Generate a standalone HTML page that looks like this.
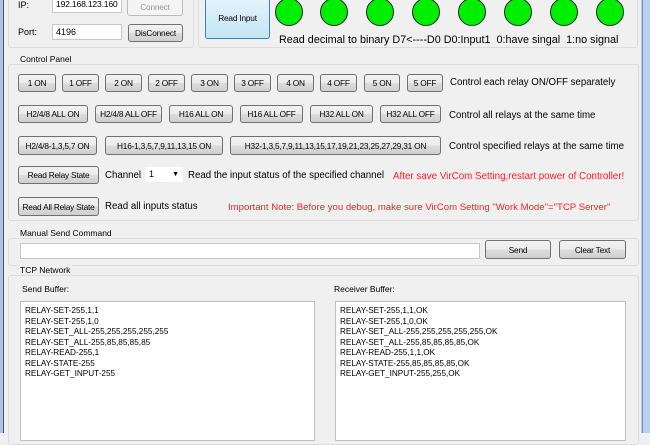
<!DOCTYPE html>
<html><head><style>
*{margin:0;padding:0;box-sizing:border-box}
body{width:650px;height:433px;overflow:hidden;background:#f0f0f0;font-family:"Liberation Sans",sans-serif;font-size:9.7px;color:#000;position:relative}
.a{position:absolute;white-space:nowrap}
.b{position:absolute;border:1px solid #707070;border-radius:3px;background:linear-gradient(#f2f2f2,#ebebeb 50%,#dddddd 51%,#cfcfcf);font-size:8.3px;letter-spacing:-0.2px;text-align:center;color:#000;display:flex;align-items:center;justify-content:center;white-space:nowrap;overflow:hidden}
.g{position:absolute;border:1px solid #dcdcdc;border-radius:3px}
.in{position:absolute;background:#fff;border:1px solid #c8c8c8;font-size:9px;padding-left:3px;white-space:nowrap;overflow:hidden}
.c{position:absolute;width:28px;height:28px;border-radius:50%;background:#00ee00;border:1px solid #222;top:-2px}
.t{position:absolute;background:#fff;border:1px solid #c0c0c0;font-size:8.2px;line-height:10.5px;padding:4px 4px;white-space:pre}
.r{color:#ff2020}
</style></head><body>
<div class="a" style="left:0;top:0;width:3px;height:433px;background:#a9c4e4"></div>
<div class="a" style="left:3px;top:0;width:1px;height:433px;background:#555"></div>
<div class="a" style="left:641px;top:0;width:9px;height:433px;background:#b8d2ee"></div>
<div class="a" style="left:642px;top:0;width:1px;height:433px;background:#6f8fb8"></div>

<div class="g" style="left:8px;top:-5px;width:186px;height:53px"></div>
<div class="g" style="left:198px;top:-5px;width:440px;height:53px"></div>
<div class="a" style="left:18px;top:0px;font-size:9px">IP:</div>
<div class="in" style="left:52px;top:-2px;width:70px;height:15px;font-size:8.6px;letter-spacing:-0.2px">192.168.123.160</div>
<div class="b" style="left:127px;top:-3px;width:56px;height:19px;color:#999;background:#f4f4f4;border-color:#bbb">Connect</div>
<div class="a" style="left:18px;top:27px;font-size:9px">Port:</div>
<div class="in" style="left:52px;top:24px;width:70px;height:16px;line-height:14px">4196</div>
<div class="b" style="left:128px;top:24px;width:55px;height:18px">DisConnect</div>
<div class="b" style="left:205px;top:-4px;width:65px;height:43px;background:linear-gradient(#e5f4fc,#c4e5f6);border-color:#3c7fb1">Read Input</div>
<div class="c" style="left:275px"></div><div class="c" style="left:320px"></div><div class="c" style="left:366px"></div><div class="c" style="left:412px"></div><div class="c" style="left:458px"></div><div class="c" style="left:504px"></div><div class="c" style="left:550px"></div><div class="c" style="left:596px"></div>
<div class="a" style="left:279px;top:34px;font-size:10.8px">Read decimal to binary D7&lt;----D0 D0:Input1&nbsp; 0:have singal&nbsp; 1:no signal</div>

<div class="g" style="left:8px;top:64px;width:631px;height:157px"></div>
<div class="a" style="left:18px;top:54px;font-size:8.5px;background:#f0f0f0;padding:0 2px">Control Panel</div>
<div class="b" style="left:18px;top:74px;width:38px;height:18px">1 ON</div>
<div class="b" style="left:62px;top:74px;width:37px;height:18px">1 OFF</div>
<div class="b" style="left:105px;top:74px;width:37px;height:18px">2 ON</div>
<div class="b" style="left:148px;top:74px;width:37px;height:18px">2 OFF</div>
<div class="b" style="left:191px;top:74px;width:37px;height:18px">3 ON</div>
<div class="b" style="left:234px;top:74px;width:37px;height:18px">3 OFF</div>
<div class="b" style="left:277px;top:74px;width:37px;height:18px">4 ON</div>
<div class="b" style="left:320px;top:74px;width:37px;height:18px">4 OFF</div>
<div class="b" style="left:364px;top:74px;width:36px;height:18px">5 ON</div>
<div class="b" style="left:407px;top:74px;width:36px;height:18px">5 OFF</div>
<div class="a" style="left:450px;top:77px">Control each relay ON/OFF separately</div>

<div class="b" style="left:18px;top:105px;width:70px;height:18px">H2/4/8 ALL ON</div>
<div class="b" style="left:95px;top:105px;width:67px;height:18px">H2/4/8 ALL OFF</div>
<div class="b" style="left:169px;top:105px;width:64px;height:18px">H16 ALL ON</div>
<div class="b" style="left:240px;top:105px;width:63px;height:18px">H16 ALL OFF</div>
<div class="b" style="left:310px;top:105px;width:63px;height:18px">H32 ALL ON</div>
<div class="b" style="left:380px;top:105px;width:61px;height:18px">H32 ALL OFF</div>
<div class="a" style="left:449px;top:110px">Control all relays at the same time</div>

<div class="b" style="left:18px;top:136px;width:79px;height:19px">H2/4/8-1,3,5,7 ON</div>
<div class="b" style="left:105px;top:136px;width:118px;height:19px">H16-1,3,5,7,9,11,13,15 ON</div>
<div class="b" style="left:230px;top:136px;width:211px;height:19px">H32-1,3,5,7,9,11,13,15,17,19,21,23,25,27,29,31 ON</div>
<div class="a" style="left:449px;top:141px">Control specified relays at the same time</div>

<div class="b" style="left:18px;top:166px;width:81px;height:18px">Read Relay State</div>
<div class="a" style="left:105px;top:170px">Channel</div>
<div class="in" style="left:145px;top:167px;width:38px;height:15px;border-color:#fff;line-height:13px">1<span style="position:absolute;right:3px;top:0;font-size:7px">▼</span></div>
<div class="a" style="left:188px;top:170px">Read the input status of the specified channel</div>
<div class="a r" style="left:393px;top:171px;font-size:9.8px">After save VirCom Setting,restart power of Controller!</div>

<div class="b" style="left:18px;top:197px;width:81px;height:19px">Read All Relay State</div>
<div class="a" style="left:105px;top:201px">Read all inputs status</div>
<div class="a r" style="left:228px;top:202px;font-size:9.6px">Important Note: Before you debug, make sure VirCom Setting "Work Mode"="TCP Server"</div>

<div class="g" style="left:8px;top:238px;width:631px;height:28px"></div>
<div class="a" style="left:18px;top:228px;font-size:8.5px;background:#f0f0f0;padding:0 2px">Manual Send Command</div>
<div class="in" style="left:20px;top:243px;width:460px;height:16px"></div>
<div class="b" style="left:485px;top:240px;width:66px;height:19px">Send</div>
<div class="b" style="left:559px;top:240px;width:67px;height:19px">Clear Text</div>

<div class="g" style="left:8px;top:275px;width:631px;height:170px"></div>
<div class="a" style="left:18px;top:265px;font-size:8.5px;background:#f0f0f0;padding:0 2px">TCP Network</div>
<div class="a" style="left:22px;top:284px;font-size:8.5px">Send Buffer:</div>
<div class="a" style="left:334px;top:284px;font-size:8.5px">Receiver Buffer:</div>
<div class="t" style="left:20px;top:301px;width:295px;height:140px">RELAY-SET-255,1,1
RELAY-SET-255,1,0
RELAY-SET_ALL-255,255,255,255,255
RELAY-SET_ALL-255,85,85,85,85
RELAY-READ-255,1
RELAY-STATE-255
RELAY-GET_INPUT-255</div>
<div class="t" style="left:335px;top:301px;width:291px;height:140px">RELAY-SET-255,1,1,OK
RELAY-SET-255,1,0,OK
RELAY-SET_ALL-255,255,255,255,255,OK
RELAY-SET_ALL-255,85,85,85,85,OK
RELAY-READ-255,1,1,OK
RELAY-STATE-255,85,85,85,85,OK
RELAY-GET_INPUT-255,255,OK</div>
</body></html>
